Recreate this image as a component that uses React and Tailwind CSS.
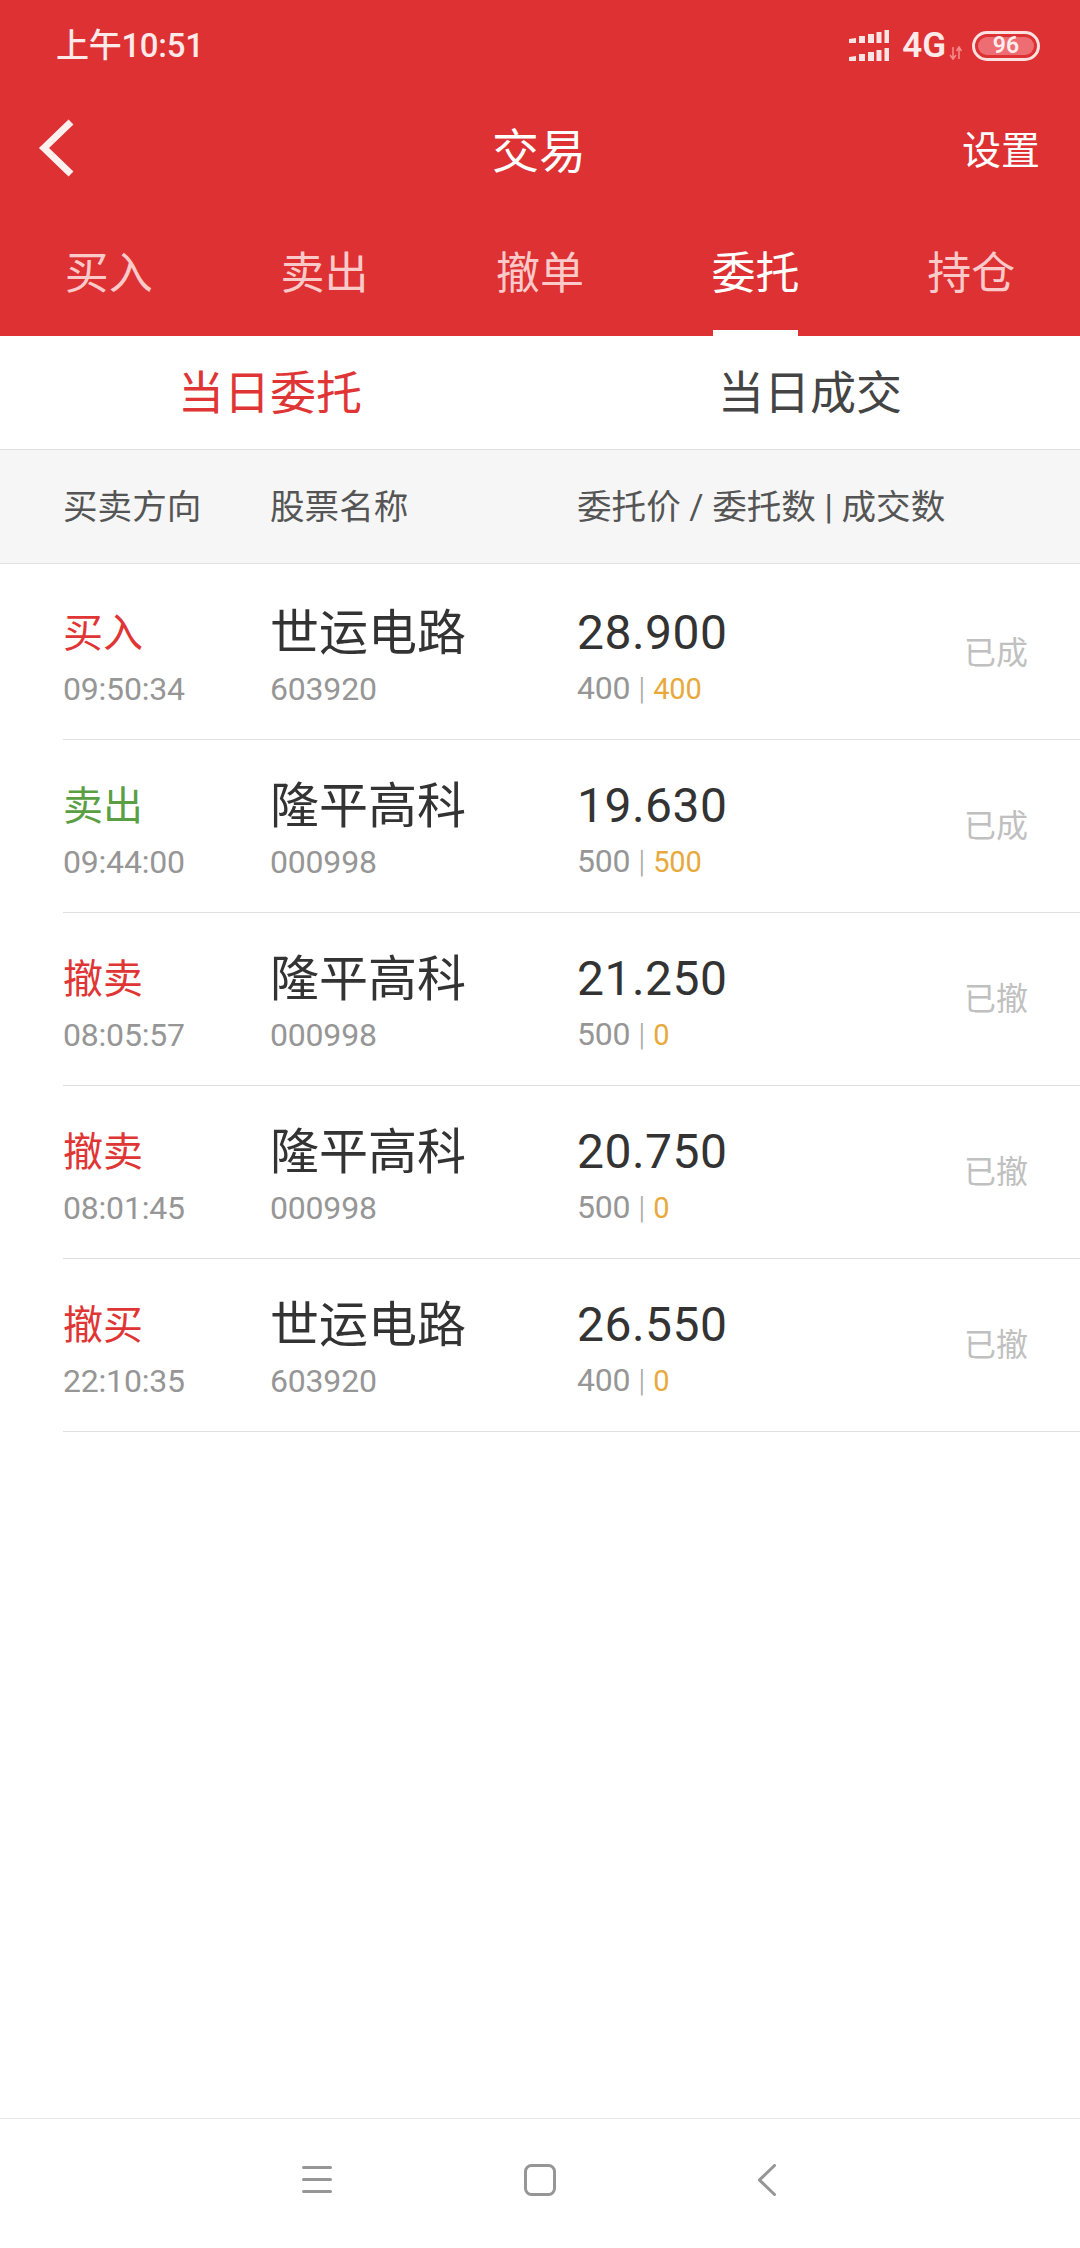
// App.jsx
const FONT = "font-['Roboto','Noto_Sans_CJK_SC',sans-serif]";

const tabs = [
  { label: "买入" },
  { label: "卖出" },
  { label: "撤单" },
  { label: "委托", active: true },
  { label: "持仓" },
];

const orders = [
  { side: "买入", color: "text-[#e03535]", time: "09:50:34", name: "世运电路", code: "603920", price: "28.900", qty: "400", done: "400", status: "已成" },
  { side: "卖出", color: "text-[#5b9f45]", time: "09:44:00", name: "隆平高科", code: "000998", price: "19.630", qty: "500", done: "500", status: "已成" },
  { side: "撤卖", color: "text-[#e03535]", time: "08:05:57", name: "隆平高科", code: "000998", price: "21.250", qty: "500", done: "0", status: "已撤" },
  { side: "撤卖", color: "text-[#e03535]", time: "08:01:45", name: "隆平高科", code: "000998", price: "20.750", qty: "500", done: "0", status: "已撤" },
  { side: "撤买", color: "text-[#e03535]", time: "22:10:35", name: "世运电路", code: "603920", price: "26.550", qty: "400", done: "0", status: "已撤" },
];

const SignalIcon = () => (
  <svg width="40" height="31" viewBox="0 0 40 31" fill="#fde4e4">
    <path d="M0 9 L7 8 V13 H0Z M10 6 H16 V13 H10Z M19 4 H25 V13 H19Z M27.5 2 H32.5 V13 H27.5Z M35.5 0 H40 V13 H35.5Z" />
    <path d="M0 27 L7 26 V31 H0Z M10 24 H16 V31 H10Z M19 22 H25 V31 H19Z M27.5 20 H32.5 V31 H27.5Z M35.5 18 H40 V31 H35.5Z" />
  </svg>
);

const DataArrows = () => (
  <svg width="13" height="14" viewBox="0 0 13 14" fill="none" stroke="#f58a8a" strokeWidth="1.6">
    <path d="M4 1V12M1 9l3 4 3-4" />
    <path d="M10 13V2M7.5 5L10 1l2.5 4" />
  </svg>
);

const Battery = () => (
  <div className="flex h-[30px] w-[68px] items-center rounded-full border-[3px] border-[#fde0e0] p-[3px]">
    <div className="flex h-full w-full items-center justify-center rounded-full bg-[#ee6d72] text-[23px] leading-none font-semibold text-[#ffecec]">
      96
    </div>
  </div>
);

const StatusBar = () => (
  <div className="flex h-[91px] items-center justify-between pr-[40px] pl-[56px] text-[#ffe9e9]">
    <span className="text-[33px] leading-none font-medium tracking-[-0.3px]">上午10:51</span>
    <div className="flex items-center">
      <SignalIcon />
      <span className="ml-[13px] text-[35px] leading-none font-semibold">4G</span>
      <span className="mt-[14px] ml-[3px]"><DataArrows /></span>
      <span className="ml-[10px]"><Battery /></span>
    </div>
  </div>
);

const Header = () => (
  <div className="bg-[#dd3133]">
    <StatusBar />
    <div className="flex h-[120px] items-center pr-[40px] pl-[38px] text-white">
      <div className="mb-[6px] flex-1">
        <svg className="block" width="38" height="58" viewBox="0 0 38 58" fill="none" stroke="#fff0f0" strokeWidth="7">
          <path d="M33 3 L6 29 L33 55" />
        </svg>
      </div>
      <span className="text-[47px] leading-none">交易</span>
      <span className="flex-1 text-right text-[39px] leading-none">设置</span>
    </div>
    <div className="flex h-[125px] justify-around px-[1px]">
      {tabs.map((tab) => (
        <div key={tab.label} className="relative flex w-[216px] justify-center">
          <span className={`mt-[31px] text-[44px] leading-[64px] ${tab.active ? "text-white" : "text-[#fcc9c9]"}`}>
            {tab.label}
          </span>
          {tab.active && <div className="absolute bottom-0 h-[6px] w-[85px] bg-white" />}
        </div>
      ))}
    </div>
  </div>
);

const OrderRow = ({ order }) => (
  <div className="ml-[63px] flex h-[173px] items-center border-b border-[#dfdfdf] pt-[8px] first:h-[176px] first:pt-[11px]">
    <div className="w-[207px]">
      <div className={`text-[40px] leading-[56px] ${order.color}`}>{order.side}</div>
      <div className="mt-[7px] text-[32px] leading-[40px] tracking-[-0.2px] text-[#969696]">{order.time}</div>
    </div>
    <div className="w-[307px]">
      <div className="text-[49px] leading-[56px] text-[#333333]">{order.name}</div>
      <div className="mt-[7px] text-[32px] leading-[40px] tracking-[-0.2px] text-[#969696]">{order.code}</div>
    </div>
    <div className="w-[387px]">
      <div className="text-[48px] leading-[56px] tracking-[0.5px] text-[#333333]">{order.price}</div>
      <div className="mt-[7px] flex items-baseline text-[32px] leading-[40px] tracking-[-0.2px] text-[#969696]">
        {order.qty}
        <span className="mx-[8px] text-[32px] font-light text-[#a8a8a8]">|</span>
        <span className="text-[29px] text-[#e8a93c]">{order.done}</span>
      </div>
    </div>
    <div className="mb-[8px] text-[32px] leading-none text-[#c0c0c0]">{order.status}</div>
  </div>
);

const NavBar = () => (
  <div className="flex h-[130px] items-start border-t border-[#e6e6e6] pt-[45px] pl-[302px]">
    <svg width="30" height="32" viewBox="0 0 30 32" stroke="#969696" strokeWidth="3" strokeLinecap="round">
      <path d="M1.5 3.5H28.5M1.5 15.5H28.5M1.5 27.5H28.5" />
    </svg>
    <svg className="ml-[192px]" width="32" height="32" viewBox="0 0 32 32" fill="none" stroke="#969696" strokeWidth="3">
      <rect x="1.5" y="1.5" width="29" height="29" rx="6" />
    </svg>
    <svg className="ml-[202px]" width="18" height="32" viewBox="0 0 18 32" fill="none" stroke="#969696" strokeWidth="3" strokeLinecap="round">
      <path d="M16.5 1.5 L1.5 16 L16.5 30.5" />
    </svg>
  </div>
);

export default function App() {
  return (
    <div className={`flex h-[2248px] w-[1080px] flex-col overflow-hidden bg-white ${FONT}`}>
      <Header />
      <div className="flex h-[114px] items-center border-b border-[#dfdfdf]">
        <div className="flex-1 text-center text-[46px] leading-none text-[#e03535]">当日委托</div>
        <div className="flex-1 text-center text-[46px] leading-none text-[#444444]">当日成交</div>
      </div>
      <div className="flex h-[114px] items-center border-b border-[#e2e2e2] bg-[#f6f6f6] pt-[2px] pl-[63px] text-[34.6px] text-[#555555]">
        <span className="w-[207px]">买卖方向</span>
        <span className="w-[307px]">股票名称</span>
        <span>委托价 / 委托数 | 成交数</span>
      </div>
      <div className="flex-1">
        {orders.map((order) => (
          <OrderRow key={order.time} order={order} />
        ))}
      </div>
      <NavBar />
    </div>
  );
}
